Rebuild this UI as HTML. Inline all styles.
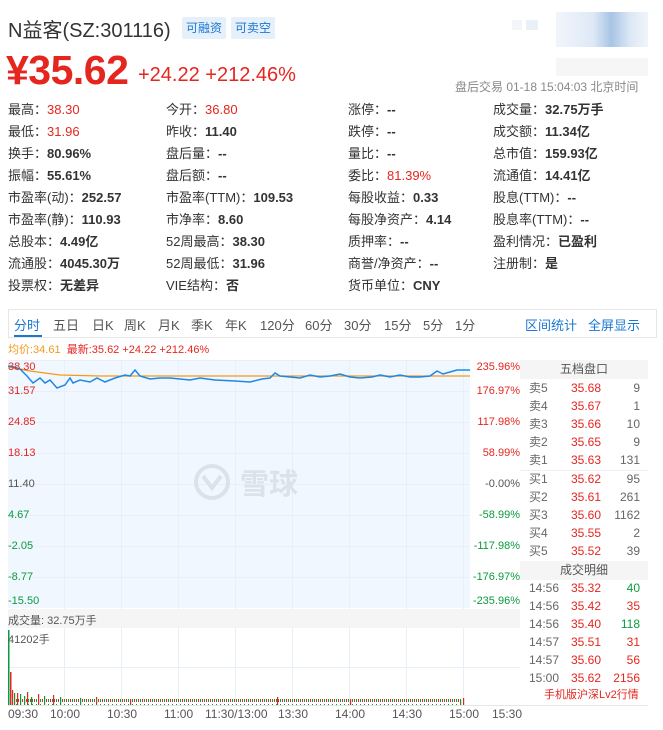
<!DOCTYPE html>
<html><head><meta charset="utf-8">
<style>
*{margin:0;padding:0;box-sizing:border-box}
body{width:663px;height:730px;background:#fff;font-family:"Liberation Sans","Noto Sans CJK SC",sans-serif;color:#333;position:relative;overflow:hidden}
.a{position:absolute;white-space:nowrap}
.red{color:#e5261f}.grn{color:#0a9b3f}.blue{color:#1b78d2}
.badge{position:absolute;top:17px;height:22px;line-height:22px;font-size:12px;color:#1b78d2;background:#e6f0fb;padding:0 4px;border-radius:2px}
.st{position:absolute;font-size:13px;line-height:22px;color:#333}
.st b{font-weight:bold;color:#333}
.st b.red{color:#e5261f;font-weight:normal}
.tabs{position:absolute;left:8px;top:309px;width:649px;height:29px;border:1px solid #e6e6e6;font-size:13px;color:#555}
.tabs span{position:absolute;top:5px}
.ob{position:absolute;left:520px;width:128px;font-size:12px}
.row{position:absolute;left:0;width:128px;height:18px;line-height:18px}
.row .l{position:absolute;left:9px;color:#666}
.row .p{position:absolute;left:51px;color:#e5261f}
.row .v{position:absolute;right:8px;color:#666}
.row .v.red{color:#e5261f}.row .v.grn{color:#0a9b3f}
.hd{position:absolute;left:0;width:128px;height:19px;line-height:19px;text-align:center;background:#f5f5f5;color:#555}
.yl{position:absolute;font-size:11px}
.tl{position:absolute;top:707px;font-size:12px;color:#555}
</style></head><body>
<div class="a" style="left:8px;top:14px;font-size:20px;color:#333">N益客(SZ:301116)</div>
<div class="badge" style="left:182px">可融资</div>
<div class="badge" style="left:231px">可卖空</div>
<div class="a" style="left:512px;top:20px;width:10px;height:10px;background:#f3f5f8"></div>
<div class="a" style="left:526px;top:20px;width:12px;height:10px;background:#eaf0f7"></div>
<div class="a" style="left:556px;top:12px;width:92px;height:35px;background:linear-gradient(90deg,#f1f5fb,#dfe9f6 40%,#a8c4e6 60%,#dbe7f5 80%,#f1f5fb)"></div>
<div class="a" style="left:556px;top:58px;width:92px;height:18px;background:#f6f6f6"></div>
<div class="a" style="left:6px;top:47px;font-size:41px;font-weight:bold;color:#e5261f;letter-spacing:-0.5px">¥35.62</div>
<div class="a" style="left:138px;top:64px;font-size:20px;color:#e5261f">+24.22 +212.46%</div>
<div class="a" style="left:455px;top:78px;font-size:12px;color:#888">盘后交易 01-18 15:04:03 北京时间</div>

<div class="st" style="left:8px;top:99px">最高：<b class="red">38.30</b></div>
<div class="st" style="left:166px;top:99px">今开：<b class="red">36.80</b></div>
<div class="st" style="left:348px;top:99px">涨停：<b>--</b></div>
<div class="st" style="left:493px;top:99px">成交量：<b>32.75万手</b></div>
<div class="st" style="left:8px;top:121px">最低：<b class="red">31.96</b></div>
<div class="st" style="left:166px;top:121px">昨收：<b>11.40</b></div>
<div class="st" style="left:348px;top:121px">跌停：<b>--</b></div>
<div class="st" style="left:493px;top:121px">成交额：<b>11.34亿</b></div>
<div class="st" style="left:8px;top:143px">换手：<b>80.96%</b></div>
<div class="st" style="left:166px;top:143px">盘后量：<b>--</b></div>
<div class="st" style="left:348px;top:143px">量比：<b>--</b></div>
<div class="st" style="left:493px;top:143px">总市值：<b>159.93亿</b></div>
<div class="st" style="left:8px;top:165px">振幅：<b>55.61%</b></div>
<div class="st" style="left:166px;top:165px">盘后额：<b>--</b></div>
<div class="st" style="left:348px;top:165px">委比：<b class="red">81.39%</b></div>
<div class="st" style="left:493px;top:165px">流通值：<b>14.41亿</b></div>
<div class="st" style="left:8px;top:187px">市盈率(动)：<b>252.57</b></div>
<div class="st" style="left:166px;top:187px">市盈率(TTM)：<b>109.53</b></div>
<div class="st" style="left:348px;top:187px">每股收益：<b>0.33</b></div>
<div class="st" style="left:493px;top:187px">股息(TTM)：<b>--</b></div>
<div class="st" style="left:8px;top:209px">市盈率(静)：<b>110.93</b></div>
<div class="st" style="left:166px;top:209px">市净率：<b>8.60</b></div>
<div class="st" style="left:348px;top:209px">每股净资产：<b>4.14</b></div>
<div class="st" style="left:493px;top:209px">股息率(TTM)：<b>--</b></div>
<div class="st" style="left:8px;top:231px">总股本：<b>4.49亿</b></div>
<div class="st" style="left:166px;top:231px">52周最高：<b>38.30</b></div>
<div class="st" style="left:348px;top:231px">质押率：<b>--</b></div>
<div class="st" style="left:493px;top:231px">盈利情况：<b>已盈利</b></div>
<div class="st" style="left:8px;top:253px">流通股：<b>4045.30万</b></div>
<div class="st" style="left:166px;top:253px">52周最低：<b>31.96</b></div>
<div class="st" style="left:348px;top:253px">商誉/净资产：<b>--</b></div>
<div class="st" style="left:493px;top:253px">注册制：<b>是</b></div>
<div class="st" style="left:8px;top:275px">投票权：<b>无差异</b></div>
<div class="st" style="left:166px;top:275px">VIE结构：<b>否</b></div>
<div class="st" style="left:348px;top:275px">货币单位：<b>CNY</b></div>

<div class="tabs">
<span class="blue" style="left:5px">分时</span>
<div class="a" style="left:5px;top:25px;width:28px;height:2px;background:#1b78d2"></div>
<span style="left:44px">五日</span><span style="left:83px">日K</span><span style="left:115px">周K</span><span style="left:149px">月K</span><span style="left:182px">季K</span><span style="left:216px">年K</span><span style="left:251px">120分</span><span style="left:296px">60分</span><span style="left:335px">30分</span><span style="left:375px">15分</span><span style="left:414px">5分</span><span style="left:446px">1分</span>
<span class="blue" style="left:516px">区间统计</span><span class="blue" style="left:579px">全屏显示</span>
</div>
<div class="a" style="left:8px;top:341px;font-size:11px"><span style="color:#f29a1a">均价:34.61</span>&nbsp; <span class="red">最新:35.62 +24.22 +212.46%</span></div>

<svg class="a" style="left:0;top:0" width="663" height="730">
<rect x="8" y="360" width="462" height="248" fill="#f0f7ff"/>
<g stroke="#e9eff6" stroke-width="1">
<line x1="8" y1="360.5" x2="470" y2="360.5"/><line x1="8" y1="391.5" x2="470" y2="391.5"/><line x1="8" y1="422.5" x2="470" y2="422.5"/><line x1="8" y1="453.5" x2="470" y2="453.5"/><line x1="8" y1="484.5" x2="470" y2="484.5"/><line x1="8" y1="515.5" x2="470" y2="515.5"/><line x1="8" y1="546.5" x2="470" y2="546.5"/><line x1="8" y1="577.5" x2="470" y2="577.5"/>
<line x1="64.5" y1="360" x2="64.5" y2="705"/><line x1="121.5" y1="360" x2="121.5" y2="705"/><line x1="178.5" y1="360" x2="178.5" y2="705"/><line x1="235.5" y1="360" x2="235.5" y2="705"/><line x1="292.5" y1="360" x2="292.5" y2="705"/><line x1="349.5" y1="360" x2="349.5" y2="705"/><line x1="406.5" y1="360" x2="406.5" y2="705"/><line x1="463.5" y1="360" x2="463.5" y2="705"/>
<line x1="8" y1="667.5" x2="520" y2="667.5"/>
</g>
<rect x="8" y="609" width="512" height="19" fill="#f5f5f5"/>
<line x1="8" y1="705.5" x2="648" y2="705.5" stroke="#e6e6e6"/>
<circle cx="212" cy="482" r="16" fill="none" stroke="#dbe2ec" stroke-width="4"/>
<path d="M203 476 L212 488 L221 476" fill="none" stroke="#dbe2ec" stroke-width="4"/>
<text x="240" y="494" font-size="29" fill="#dbe2ec" font-family="Noto Sans CJK SC,sans-serif" font-weight="bold">雪球</text>
<polyline fill="none" stroke="#f29a1a" stroke-width="1.2" points="8,367 30,371 60,375 100,376 200,376 300,376 470,376"/>
<polyline fill="none" stroke="#1e88e5" stroke-width="1.5" points="8,366 14,367 20,369 27,376 33,383 40,378 45,383 50,380 57,388 65,385 70,378 73,383 80,380 90,382 97,378 105,382 115,378 125,375 130,376 135,370 140,376 150,379 160,378 170,378 180,379 190,380 200,378 215,380 235,381 250,382 262,379 270,378 275,373 280,376 300,378 310,375 320,377 330,376 340,374 350,377 360,378 372,377 380,375 390,377 400,375 410,377 420,377 430,376 437,371 443,374 450,372 457,370 470,370"/>
<rect x="8" y="630" width="1.5" height="75" fill="#0a9b3f"/>
<rect x="10" y="672" width="1.5" height="33" fill="#e5261f"/>
<g fill="#e5261f"><rect x="12" y="690" width="1.2" height="15"/><rect x="17" y="693" width="1.2" height="12"/><rect x="27" y="692" width="1.2" height="13"/><rect x="38" y="694" width="1.2" height="11"/><rect x="53" y="695" width="1.2" height="10"/><rect x="96" y="697" width="1.2" height="8"/><rect x="130" y="699" width="1.2" height="6"/><rect x="277" y="697" width="1.2" height="8"/><rect x="350" y="699" width="1.2" height="6"/><rect x="463" y="698" width="1.2" height="7"/></g>
<g fill="#0a9b3f"><rect x="14" y="693" width="1.2" height="12"/><rect x="20" y="694" width="1.2" height="11"/><rect x="24" y="696" width="1.2" height="9"/><rect x="31" y="697" width="1.2" height="8"/><rect x="44" y="696" width="1.2" height="9"/><rect x="60" y="697" width="1.2" height="8"/><rect x="80" y="698" width="1.2" height="7"/><rect x="460" y="700" width="1.2" height="5"/></g>
<rect x="12" y="699" width="450" height="6" fill="url(#vb)"/>
<defs><pattern id="vb" width="4" height="6" patternUnits="userSpaceOnUse"><rect x="0" y="2" width="1" height="4" fill="#0a9b3f"/><rect x="2" y="3" width="1" height="3" fill="#e5261f"/></pattern></defs>
</svg>

<div class="yl red" style="left:8px;top:361px">38.30</div>
<div class="yl red" style="left:8px;top:385px">31.57</div>
<div class="yl red" style="left:8px;top:416px">24.85</div>
<div class="yl red" style="left:8px;top:447px">18.13</div>
<div class="yl" style="left:8px;top:478px;color:#555">11.40</div>
<div class="yl grn" style="left:8px;top:509px">4.67</div>
<div class="yl grn" style="left:8px;top:540px">-2.05</div>
<div class="yl grn" style="left:8px;top:571px">-8.77</div>
<div class="yl grn" style="left:8px;top:595px">-15.50</div>
<div class="yl red" style="right:143px;top:361px">235.96%</div>
<div class="yl red" style="right:143px;top:385px">176.97%</div>
<div class="yl red" style="right:143px;top:416px">117.98%</div>
<div class="yl red" style="right:143px;top:447px">58.99%</div>
<div class="yl" style="right:143px;top:478px;color:#555">-0.00%</div>
<div class="yl grn" style="right:143px;top:509px">-58.99%</div>
<div class="yl grn" style="right:143px;top:540px">-117.98%</div>
<div class="yl grn" style="right:143px;top:571px">-176.97%</div>
<div class="yl grn" style="right:143px;top:595px">-235.96%</div>
<div class="yl" style="left:8px;top:612px;color:#555">成交量: 32.75万手</div>
<div class="yl" style="left:8px;top:631px;color:#555">41202手</div>

<div class="tl" style="left:8px">09:30</div><div class="tl" style="left:50px">10:00</div><div class="tl" style="left:107px">10:30</div><div class="tl" style="left:164px">11:00</div><div class="tl" style="left:205px">11:30/13:00</div><div class="tl" style="left:278px">13:30</div><div class="tl" style="left:335px">14:00</div><div class="tl" style="left:392px">14:30</div><div class="tl" style="left:449px">15:00</div><div class="tl" style="left:492px">15:30</div>

<div class="ob" style="top:360px">
<div class="hd" style="top:0">五档盘口</div>
<div class="row" style="top:19px"><span class="l">卖5</span><span class="p">35.68</span><span class="v">9</span></div>
<div class="row" style="top:37px"><span class="l">卖4</span><span class="p">35.67</span><span class="v">1</span></div>
<div class="row" style="top:55px"><span class="l">卖3</span><span class="p">35.66</span><span class="v">10</span></div>
<div class="row" style="top:73px"><span class="l">卖2</span><span class="p">35.65</span><span class="v">9</span></div>
<div class="row" style="top:91px"><span class="l">卖1</span><span class="p">35.63</span><span class="v">131</span></div>
<div class="a" style="left:0;top:110px;width:128px;height:1px;background:#f0f0f0"></div>
<div class="row" style="top:110px"><span class="l">买1</span><span class="p">35.62</span><span class="v">95</span></div>
<div class="row" style="top:128px"><span class="l">买2</span><span class="p">35.61</span><span class="v">261</span></div>
<div class="row" style="top:146px"><span class="l">买3</span><span class="p">35.60</span><span class="v">1162</span></div>
<div class="row" style="top:164px"><span class="l">买4</span><span class="p">35.55</span><span class="v">2</span></div>
<div class="row" style="top:182px"><span class="l">买5</span><span class="p">35.52</span><span class="v">39</span></div>
<div class="hd" style="top:201px">成交明细</div>
<div class="row" style="top:219px"><span class="l">14:56</span><span class="p">35.32</span><span class="v grn">40</span></div>
<div class="row" style="top:237px"><span class="l">14:56</span><span class="p">35.42</span><span class="v red">35</span></div>
<div class="row" style="top:255px"><span class="l">14:56</span><span class="p">35.40</span><span class="v grn">118</span></div>
<div class="row" style="top:273px"><span class="l">14:57</span><span class="p">35.51</span><span class="v red">31</span></div>
<div class="row" style="top:291px"><span class="l">14:57</span><span class="p">35.60</span><span class="v red">56</span></div>
<div class="row" style="top:309px"><span class="l">15:00</span><span class="p">35.62</span><span class="v red">2156</span></div>
<div class="a red" style="left:24px;top:326px;font-size:11px">手机版沪深Lv2行情</div>
</div>
</body></html>
